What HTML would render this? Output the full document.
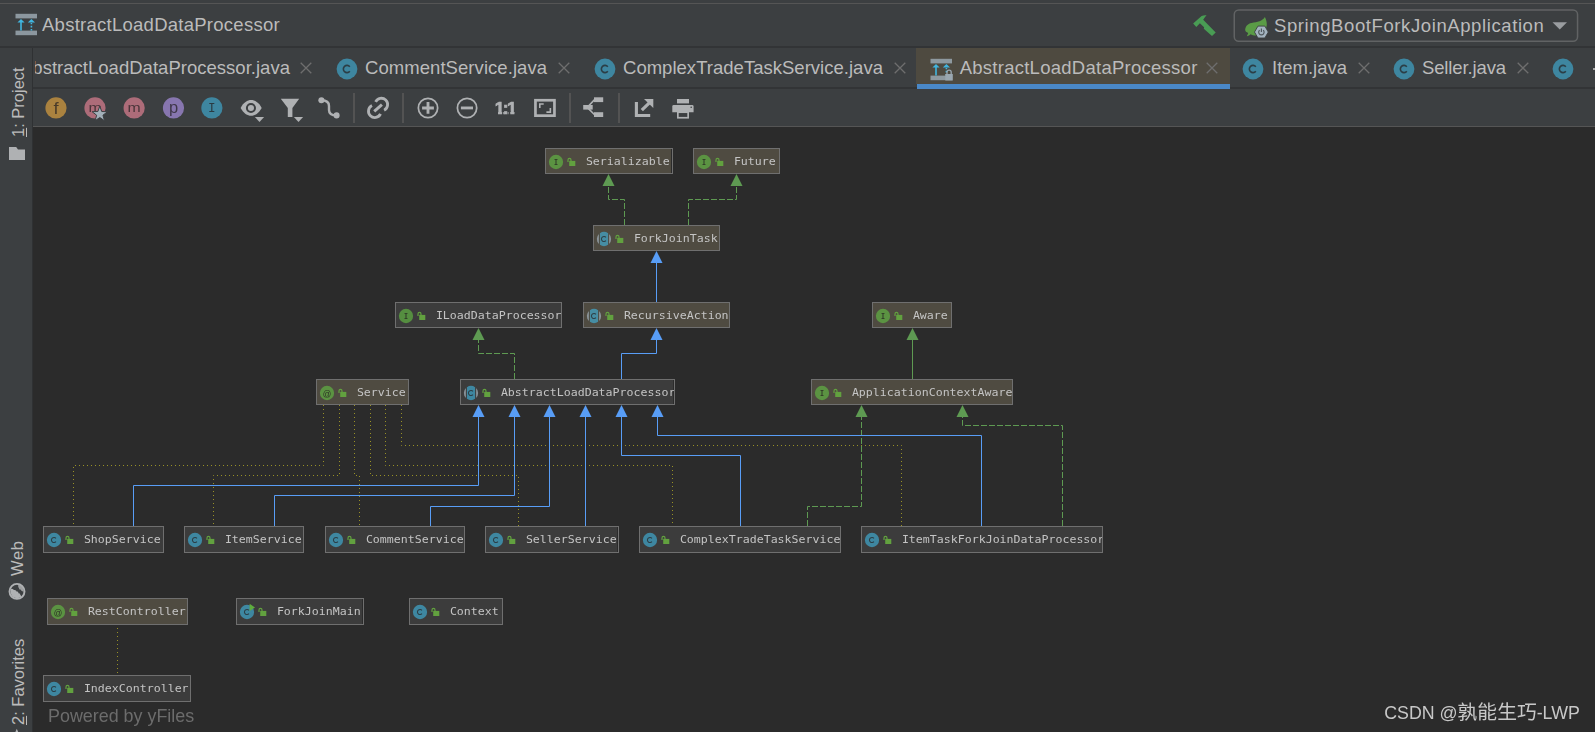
<!DOCTYPE html>
<html><head><meta charset="utf-8"><title>AbstractLoadDataProcessor</title>
<style>
html,body{margin:0;padding:0}
body{width:1595px;height:732px;overflow:hidden;background:#2b2b2b;position:relative;font-family:"Liberation Sans",sans-serif;color:#bbbbbb}
div,svg,span{position:absolute}
#nav{left:0;top:0;width:1595px;height:46px;background:#3c3f41}
#nav .l1{left:0;top:3px;width:1595px;height:1px;background:#555555}
#navb{left:0;top:46px;width:1595px;height:2px;background:#323436}
#tabs{left:0;top:48px;width:1595px;height:39px;background:#3c3f41}
#tabsb{left:0;top:87px;width:1595px;height:2px;background:#323436}
#tool{left:0;top:89px;width:1595px;height:37px;background:#3c3f41}
#toolb{left:33px;top:126px;width:1562px;height:1px;background:#555555}
#side{left:0;top:48px;width:32px;height:684px;background:#3c3f41}
#sideb{left:32px;top:48px;width:1px;height:684px;background:#2f3133}
.t{font-size:18.5px;line-height:24px;white-space:nowrap;color:#bbbbbb;top:8.4px}
.tc{top:10px}
.sv{font-size:16.5px;line-height:20px;white-space:nowrap;color:#bbbbbb;transform-origin:0 0;transform:rotate(-90deg)}
.node{height:26px;box-sizing:border-box;border:1px solid #6f6f6f;overflow:hidden}
.node.lib{background:#4f4b41}
.node.prj{background:#3c3c3c}
.node .ic{left:2px;top:5px}
.node .lk{left:21px;top:8px}
.node span{left:39.9px;top:2px;font:11.6px/20px "DejaVu Sans Mono","Liberation Mono",monospace;color:#c4c4c4;white-space:pre;transform:scaleY(0.91);transform-origin:0 14.3px}
#wm b{font-weight:normal;font-size:19.8px;position:static;letter-spacing:0}
#yf{left:48px;top:705.4px;font-size:17.9px;line-height:22px;color:#6c6c6c;white-space:nowrap}
#wm{left:1384.2px;top:700px;font-size:17.8px;line-height:24px;color:#c8c8c8;white-space:nowrap;font-family:"Liberation Sans","Noto Sans CJK SC",sans-serif}
</style></head><body>
<div id="nav"><div class="l1"></div>
<div style="left:15px;top:12.7px;width:24px;height:24px"><svg width="24" height="24" viewBox="0 0 24 24"><rect x="0.5" y="0.8" width="21.5" height="4.6" fill="#9aa7b0" fill-opacity=".85"/><rect x="0.5" y="17.6" width="21.5" height="4.6" fill="#9aa7b0" fill-opacity=".85"/><path d="M6,17.6 V8.5" stroke="#40b6e0" stroke-width="1.6" fill="none"/><path d="M2.4,9.6 L6,6 L9.6,9.6 z" fill="#40b6e0"/><path d="M16.4,17.6 V10" stroke="#40b6e0" stroke-width="1.6" stroke-dasharray="1.6 1.6" fill="none"/><path d="M12.8,9.6 L16.4,6 L20,9.6 z" fill="#40b6e0"/></svg></div>
<span class="t" style="left:42px;top:13.4px;letter-spacing:0.26px">AbstractLoadDataProcessor</span>
<svg style="left:1191px;top:13px" width="28" height="26" viewBox="0 0 28 26"><path d="M2.15,10.5 L10.6,2.97 Q12.8,2 15.6,2.3 Q13.4,4.5 12.2,6.7 L24.7,19.6 L21,23 L12.8,15.7 L13.1,14.3 L8.9,10.2 L5.3,13.9 z" fill="#499c54"/></svg>
<svg style="left:1230px;top:6px" width="352" height="40" viewBox="1230 6 352 40"><rect x="1234.25" y="9.95" width="343.3" height="31.4" rx="4.5" fill="none" stroke="#616364" stroke-width="1.5"/></svg><svg style="left:1244px;top:16px" width="26" height="24" viewBox="0 0 26 24"><path d="M1.2,14.1 C1.2,10.5 3.5,7.6 7.5,6.9 C10.5,6.3 13,6.3 15.5,5.3 C17.8,4.4 19.6,2.9 20.9,0.9 C22.2,3.5 23,6 22.8,9.1 C22.5,13 20.5,16.5 17,18.3 C13.5,20 9,19.6 6.6,18.2 C5.6,19.2 4.4,19.9 2.8,20.2 C3.4,19 3.9,18 4.2,17 C2.2,16.3 1.2,15.3 1.2,14.1z" fill="#5a9b46"/><path d="M13.95,10.1 L20.85,10.1 L24.3,16.05 L20.85,22 L13.95,22 L10.5,16.05z" fill="#a3b3bf" stroke="#3c3f41" stroke-width="0.9"/><path d="M15.6,14.2 A2.7,2.7 0 1 0 19.2,14.2" fill="none" stroke="#4b5358" stroke-width="1.1"/><path d="M17.4,12.6 V16" stroke="#4b5358" stroke-width="1.1"/></svg><span class="t" style="left:1274px;top:14.4px;letter-spacing:0.6px">SpringBootForkJoinApplication</span><svg style="left:1552px;top:22px" width="16" height="8" viewBox="0 0 16 8"><path d="M0.5,0.3 H15 L7.75,7.6z" fill="#9a9da0"/></svg>
</div>
<div id="navb"></div>
<div id="tabs">
<div style="left:35px;top:0;width:260px;height:39px;overflow:hidden"><span class="t" style="right:5px;letter-spacing:0.02px">AbstractLoadDataProcessor.java</span></div>
<svg class="x" style="left:300px;top:14px" width="12" height="12" viewBox="0 0 12 12"><path d="M0.7,0.7 L11.3,11.3 M11.3,0.7 L0.7,11.3" stroke="#6e6e6e" stroke-width="1.3" fill="none"/></svg>
<svg class="tc" style="left:336px" width="22" height="22" viewBox="0 0 22 22"><circle cx="11" cy="11" r="10.4" fill="#40b6e0" fill-opacity=".6"/><path d="M13.8,13.35 A3.65,3.65 0 1 1 13.8,8.65" fill="none" stroke="#231f20" stroke-opacity=".7" stroke-width="1.6"/></svg>
<span class="t" style="left:365px;letter-spacing:0.06px">CommentService.java</span>
<svg class="x" style="left:558px;top:14px" width="12" height="12" viewBox="0 0 12 12"><path d="M0.7,0.7 L11.3,11.3 M11.3,0.7 L0.7,11.3" stroke="#6e6e6e" stroke-width="1.3" fill="none"/></svg>
<svg class="tc" style="left:594px" width="22" height="22" viewBox="0 0 22 22"><circle cx="11" cy="11" r="10.4" fill="#40b6e0" fill-opacity=".6"/><path d="M13.8,13.35 A3.65,3.65 0 1 1 13.8,8.65" fill="none" stroke="#231f20" stroke-opacity=".7" stroke-width="1.6"/></svg>
<span class="t" style="left:623px;letter-spacing:0.02px">ComplexTradeTaskService.java</span>
<svg class="x" style="left:894px;top:14px" width="12" height="12" viewBox="0 0 12 12"><path d="M0.7,0.7 L11.3,11.3 M11.3,0.7 L0.7,11.3" stroke="#6e6e6e" stroke-width="1.3" fill="none"/></svg>
<div style="left:916px;top:0;width:314px;height:36px;background:#4e4a40"></div>
<div style="left:930px;top:10px;width:24px;height:24px"><svg width="24" height="24" viewBox="0 0 24 24"><rect x="0.5" y="0.8" width="21.5" height="4.6" fill="#9aa7b0" fill-opacity=".85"/><rect x="0.5" y="17.6" width="21.5" height="4.6" fill="#9aa7b0" fill-opacity=".85"/><path d="M6,17.6 V8.5" stroke="#40b6e0" stroke-width="1.6" fill="none"/><path d="M2.4,9.6 L6,6 L9.6,9.6 z" fill="#40b6e0"/><path d="M16.4,17.6 V10" stroke="#40b6e0" stroke-width="1.6" stroke-dasharray="1.6 1.6" fill="none"/><path d="M12.8,9.6 L16.4,6 L20,9.6 z" fill="#40b6e0"/><rect x="15.3" y="16" width="7.5" height="6.5" fill="#9aa7b0"/><path d="M17,16 V14.2 A2.1,2.1 0 0 1 21.2,14.2 V16" fill="none" stroke="#9aa7b0" stroke-width="1.3"/></svg></div>
<span class="t" style="left:959.7px;letter-spacing:0.26px">AbstractLoadDataProcessor</span>
<svg class="x" style="left:1206px;top:14px" width="12" height="12" viewBox="0 0 12 12"><path d="M0.7,0.7 L11.3,11.3 M11.3,0.7 L0.7,11.3" stroke="#6e6e6e" stroke-width="1.3" fill="none"/></svg>
<svg class="tc" style="left:1242px" width="22" height="22" viewBox="0 0 22 22"><circle cx="11" cy="11" r="10.4" fill="#40b6e0" fill-opacity=".6"/><path d="M13.8,13.35 A3.65,3.65 0 1 1 13.8,8.65" fill="none" stroke="#231f20" stroke-opacity=".7" stroke-width="1.6"/></svg>
<span class="t" style="left:1272px;letter-spacing:0px">Item.java</span>
<svg class="x" style="left:1358px;top:14px" width="12" height="12" viewBox="0 0 12 12"><path d="M0.7,0.7 L11.3,11.3 M11.3,0.7 L0.7,11.3" stroke="#6e6e6e" stroke-width="1.3" fill="none"/></svg>
<svg class="tc" style="left:1393px" width="22" height="22" viewBox="0 0 22 22"><circle cx="11" cy="11" r="10.4" fill="#40b6e0" fill-opacity=".6"/><path d="M13.8,13.35 A3.65,3.65 0 1 1 13.8,8.65" fill="none" stroke="#231f20" stroke-opacity=".7" stroke-width="1.6"/></svg>
<span class="t" style="left:1422px;letter-spacing:-0.13px">Seller.java</span>
<svg class="x" style="left:1517px;top:14px" width="12" height="12" viewBox="0 0 12 12"><path d="M0.7,0.7 L11.3,11.3 M11.3,0.7 L0.7,11.3" stroke="#6e6e6e" stroke-width="1.3" fill="none"/></svg>
<svg class="tc" style="left:1552px" width="22" height="22" viewBox="0 0 22 22"><circle cx="11" cy="11" r="10.4" fill="#40b6e0" fill-opacity=".6"/><path d="M13.8,13.35 A3.65,3.65 0 1 1 13.8,8.65" fill="none" stroke="#231f20" stroke-opacity=".7" stroke-width="1.6"/></svg>
<div style="left:1593px;top:20px;width:2px;height:2px;background:#a8a8a8"></div>
</div>
<div id="tabsb"></div>
<div style="left:917px;top:84px;width:313px;height:5px;background:#4a88c7"></div>
<div id="tool">
<svg style="left:0;top:-89px;will-change:transform" width="1595" height="130" viewBox="0 0 1595 130">
<circle cx="56.0" cy="107.95" r="10.6" fill="#f4af3d" fill-opacity=".6"/><text transform="translate(56.0,113.7) scale(1.15,1)" text-anchor="middle" font-family="'Liberation Sans',sans-serif" font-size="16" fill="#231f20" fill-opacity=".72">f</text>
<circle cx="95" cy="107.95" r="10.6" fill="#f98b9e" fill-opacity=".6"/><text transform="translate(95,112.3) scale(1.22,1)" text-anchor="middle" font-family="'Liberation Sans',sans-serif" font-size="13" fill="#231f20" fill-opacity=".72">m</text><path d="M99.80,106.10 L101.74,111.53 L107.50,111.70 L102.94,115.22 L104.56,120.75 L99.80,117.50 L95.04,120.75 L96.66,115.22 L92.10,111.70 L97.86,111.53z" fill="#a3b0b9" stroke="#3c3f41" stroke-width="1" stroke-linejoin="miter"/>
<circle cx="134.15" cy="107.95" r="10.6" fill="#f98b9e" fill-opacity=".6"/><text transform="translate(134.15,112.3) scale(1.22,1)" text-anchor="middle" font-family="'Liberation Sans',sans-serif" font-size="13" fill="#231f20" fill-opacity=".72">m</text>
<circle cx="173.5" cy="107.95" r="10.6" fill="#b99bf8" fill-opacity=".6"/><text transform="translate(173.5,112.5) scale(1.0,1)" text-anchor="middle" font-family="'Liberation Sans',sans-serif" font-size="16.5" fill="#231f20" fill-opacity=".72">p</text>
<circle cx="211.9" cy="107.95" r="10.6" fill="#40b6e0" fill-opacity=".6"/><text transform="translate(211.9,112.4) scale(1.0,1)" text-anchor="middle" font-family="'DejaVu Sans Mono',monospace" font-size="12.6" fill="#231f20" fill-opacity=".72">I</text>
<path d="M240.6,107.9 C243.5,102.6 247.5,100.1 251.15,100.1 C254.8,100.1 258.8,102.6 261.7,107.9 C258.8,113.2 254.8,115.7 251.15,115.7 C247.5,115.7 243.5,113.2 240.6,107.9z" fill="#afb1b3"/><circle cx="250.95" cy="108" r="4.05" fill="none" stroke="#3c3f41" stroke-width="2"/><path d="M254.9,117 H264.1 L259.5,122.1z" fill="#afb1b3"/>
<path d="M280.8,98.8 H299.2 L292.4,108 V117 H287.8 V108z" fill="#afb1b3"/><path d="M293.9,117 H303.1 L298.5,122.1z" fill="#afb1b3"/>
<circle cx="321.4" cy="100.3" r="3.05" fill="#afb1b3"/><circle cx="336.6" cy="115.4" r="3.05" fill="#afb1b3"/><path d="M321.4,100.3 C326.5,100.3 329,101.8 329,106 L329,110 C329,114 331.5,115.4 336.6,115.4" fill="none" stroke="#afb1b3" stroke-width="2.4"/>
<rect x="353" y="93" width="2" height="30" fill="#535353"/>
<g fill="none" stroke="#afb1b3" stroke-width="2.8"><path d="M372,105.6 A6.3,6.3 0 1 0 380.5,113.9"/><path d="M384.1,110.2 A6.3,6.3 0 1 0 375.6,101.9"/><path d="M374.2,111.3 L381.9,104.7" stroke-width="3"/></g>
<rect x="402" y="93" width="2" height="30" fill="#535353"/>
<circle cx="428" cy="107.95" r="9.65" fill="none" stroke="#afb1b3" stroke-width="1.75"/><path d="M422.1,107.95 H433.9 M428,102.1 V113.8" stroke="#afb1b3" stroke-width="2.85" fill="none"/>
<circle cx="467.05" cy="107.95" r="9.65" fill="none" stroke="#afb1b3" stroke-width="1.75"/><path d="M460.9,107.95 H473" stroke="#afb1b3" stroke-width="2.85" fill="none"/>
<defs><clipPath id="c11"><rect x="490" y="95" width="30" height="16.3"/><rect x="498" y="111" width="4.1" height="4"/><rect x="510.3" y="111" width="4.1" height="4"/><rect x="503.4" y="111" width="5" height="4"/></clipPath></defs>
<text x="494.8" y="114.2" clip-path="url(#c11)" font-family="'Liberation Sans',sans-serif" font-weight="bold" font-size="17.4" letter-spacing="-1.6" fill="#afb1b3" stroke="#afb1b3" stroke-width="0.7">1:1</text>
<rect x="535.45" y="100.25" width="19" height="15.4" fill="none" stroke="#afb1b3" stroke-width="2.7"/><path d="M539.8,108 V103.95 H543.7 M550.35,108 V112.1 H546.4" fill="none" stroke="#afb1b3" stroke-width="1.6"/>
<rect x="569" y="93" width="2" height="30" fill="#535353"/>
<rect x="583.2" y="105" width="9.5" height="4.6" fill="#afb1b3"/><rect x="594" y="97.3" width="9.2" height="4.8" fill="#afb1b3"/><rect x="594" y="112.2" width="9.2" height="4.8" fill="#afb1b3"/><path d="M588.5,106 L594.6,99.6 M588.5,108.6 L594.6,114.8" stroke="#afb1b3" stroke-width="1.6" fill="none"/>
<rect x="618" y="93" width="2" height="30" fill="#535353"/>
<path d="M636.4,101.9 V115.5 H650.2" fill="none" stroke="#afb1b3" stroke-width="3.1"/><path d="M641.8,110.2 L649.6,102.6" stroke="#afb1b3" stroke-width="3.2" fill="none"/><path d="M644,99 H653.3 V108z" fill="#afb1b3"/>
<rect x="677" y="99" width="12" height="4.4" fill="#afb1b3"/><path d="M672.3,106.4 Q672.3,105 673.7,105 H692.2 Q693.6,105 693.6,106.4 V112.2 H672.3z" fill="#afb1b3"/><rect x="677.85" y="112.2" width="10.3" height="5.55" fill="none" stroke="#afb1b3" stroke-width="1.7"/><circle cx="691.2" cy="107.2" r="0.8" fill="#3c3f41"/>
</svg>
</div>
<div id="toolb"></div>
<div id="side">
<span class="sv" style="left:7.9px;top:89px"><u style="text-decoration-thickness:1px;text-underline-offset:2px">1</u>: Project</span>
<svg style="left:8px;top:98px" width="18" height="15" viewBox="0 0 18 15"><path d="M1,1 H8.2 L10,3.4 H17 V14 H1z" fill="#afb1b3"/></svg>
<span class="sv" style="left:7px;top:528.3px;letter-spacing:0.6px">Web</span>
<svg style="left:8px;top:534px" width="18" height="18" viewBox="0 0 18 18"><circle cx="9" cy="9.4" r="7.5" fill="#3c3f41" stroke="#afb1b3" stroke-width="1.9"/><path d="M2.6,7 C3.6,6.6 5,7 6,8 C7.2,7.6 8.6,8.4 8.4,9.6 C9.6,9.4 10.6,10 10.4,11.2 C11.6,11 12.6,11.8 12.2,13 C13,13.4 13.4,14.2 13,15 C11,16.6 7,16.6 4.6,14.6 C2.8,12.8 2.2,9.6 2.6,7z" fill="#afb1b3"/><path d="M9,2.4 C10.4,2.8 10.8,4 10,5 C11,5.4 11.4,6.4 11,7.2 C12.4,7 13.6,7.8 13.4,9 C14.4,9 15.2,9.6 15.4,10.4 C16,8 15.4,5.4 13.4,3.6 C12,2.6 10.4,2.2 9,2.4z" fill="#afb1b3" fill-opacity=".85"/></svg>
<span class="sv" style="left:7.5px;top:676.5px"><u style="text-decoration-thickness:1px;text-underline-offset:2px">2</u>: Favorites</span>
<svg style="left:9px;top:680px" width="16" height="6" viewBox="0 0 16 6"><path d="M7.8,0.8 L9.4,4.5 L6.2,4.5z" fill="#afb1b3"/></svg>
</div>
<div id="sideb"></div>
<svg id="edges" width="1595" height="732" viewBox="0 0 1595 732">
<g fill="none" stroke="#989126" stroke-width="1" stroke-dasharray="1 3">
<path d="M323.5,405 V465.5 H73.5 V526"/>
<path d="M339.5,405 V475.5 H213.5 V526"/>
<path d="M354.5,405 V475.5 H359.5 V526"/>
<path d="M370.5,405 V475.5 H518.5 V526"/>
<path d="M385.5,405 V465.5 H672.5 V526"/>
<path d="M401.5,405 V445.5 H901.5 V526"/>
<path d="M117.5,624 V675"/>
</g>
<g fill="none" stroke="#5e9a52" stroke-width="1" stroke-dasharray="6 2">
<path d="M624.5,225 V199.5 H608.5 V186"/>
<path d="M688.5,225 V199.5 H736.5 V186"/>
<path d="M514.5,379 V353.5 H478.5 V340"/>
<path d="M807.5,526 V506.5 H861.5 V417"/>
<path d="M1062.5,526 V425.5 H962.5 V417"/>
</g>
<g fill="none" stroke="#5e9a52" stroke-width="1">
<path d="M912.5,379 V340"/>
</g>
<g fill="none" stroke="#589df6" stroke-width="1">
<path d="M656.5,302 V263"/>
<path d="M621.5,379 V353.5 H656.5 V340"/>
<path d="M133.5,526 V485.5 H478.5 V417"/>
<path d="M274.5,526 V495.5 H514.5 V417"/>
<path d="M430.5,526 V506.5 H549.5 V417"/>
<path d="M585.5,526 V417"/>
<path d="M740.5,526 V455.5 H621.5 V417"/>
<path d="M981.5,526 V435.5 H657.5 V417"/>
</g>
<path d="M608.5,174 l6,12 h-12 z" fill="#5e9a52"/>
<path d="M736.5,174 l6,12 h-12 z" fill="#5e9a52"/>
<path d="M478.5,328 l6,12 h-12 z" fill="#5e9a52"/>
<path d="M861.5,405 l6,12 h-12 z" fill="#5e9a52"/>
<path d="M962.5,405 l6,12 h-12 z" fill="#5e9a52"/>
<path d="M912.5,328 l6,12 h-12 z" fill="#5e9a52"/>
<path d="M656.5,251 l6,12 h-12 z" fill="#589df6"/>
<path d="M656.5,328 l6,12 h-12 z" fill="#589df6"/>
<path d="M478.5,405 l6,12 h-12 z" fill="#589df6"/>
<path d="M514.5,405 l6,12 h-12 z" fill="#589df6"/>
<path d="M549.5,405 l6,12 h-12 z" fill="#589df6"/>
<path d="M585.5,405 l6,12 h-12 z" fill="#589df6"/>
<path d="M621.5,405 l6,12 h-12 z" fill="#589df6"/>
<path d="M657.5,405 l6,12 h-12 z" fill="#589df6"/>
</svg>
<div class="node lib" style="left:545px;top:148px;width:128px;box-shadow:inset -1px 0 0 #2b2b2b"><svg class="ic" width="16" height="16" viewBox="0 0 16 16"><circle cx="8" cy="8" r="7.15" fill="#62b543" fill-opacity=".68"/><path d="M6.55,5.1 h2.9 v0.9 h-0.9 v4 h0.9 v0.9 h-2.9 v-0.9 h0.9 v-4 h-0.9z" fill="#231f20" fill-opacity=".7"/></svg><svg class="lk" width="10" height="10" viewBox="0 0 10 10"><rect x="2.2" y="3.9" width="6.1" height="5.1" fill="#62a13f"/><path d="M1,4.9 V2.9 A1.5,1.5 0 0 1 4,2.9 V4" fill="none" stroke="#62a13f" stroke-width="1.2"/></svg><span>Serializable</span></div>
<div class="node lib" style="left:693px;top:148px;width:87px"><svg class="ic" width="16" height="16" viewBox="0 0 16 16"><circle cx="8" cy="8" r="7.15" fill="#62b543" fill-opacity=".68"/><path d="M6.55,5.1 h2.9 v0.9 h-0.9 v4 h0.9 v0.9 h-2.9 v-0.9 h0.9 v-4 h-0.9z" fill="#231f20" fill-opacity=".7"/></svg><svg class="lk" width="10" height="10" viewBox="0 0 10 10"><rect x="2.2" y="3.9" width="6.1" height="5.1" fill="#62a13f"/><path d="M1,4.9 V2.9 A1.5,1.5 0 0 1 4,2.9 V4" fill="none" stroke="#62a13f" stroke-width="1.2"/></svg><span>Future</span></div>
<div class="node lib" style="left:593px;top:225px;width:127px"><svg class="ic" width="16" height="16" viewBox="0 0 16 16"><path d="M3.9,2.142 A7.15,7.15 0 0 1 12.1,2.142 V13.858 A7.15,7.15 0 0 1 3.9,13.858z" fill="#40b6e0" fill-opacity=".62"/><path d="M2.9,2.989 A7.15,7.15 0 0 0 2.9,13.011z" fill="#9aa7b0" fill-opacity=".8"/><path d="M13.1,2.989 A7.15,7.15 0 0 1 13.1,13.011z" fill="#9aa7b0" fill-opacity=".8"/><path d="M9.95,9.65 A2.55,2.55 0 1 1 9.95,6.35" fill="none" stroke="#231f20" stroke-opacity=".7" stroke-width="1.05"/></svg><svg class="lk" width="10" height="10" viewBox="0 0 10 10"><rect x="2.2" y="3.9" width="6.1" height="5.1" fill="#62a13f"/><path d="M1,4.9 V2.9 A1.5,1.5 0 0 1 4,2.9 V4" fill="none" stroke="#62a13f" stroke-width="1.2"/></svg><span>ForkJoinTask</span></div>
<div class="node prj" style="left:395px;top:302px;width:167px"><svg class="ic" width="16" height="16" viewBox="0 0 16 16"><circle cx="8" cy="8" r="7.15" fill="#62b543" fill-opacity=".68"/><path d="M6.55,5.1 h2.9 v0.9 h-0.9 v4 h0.9 v0.9 h-2.9 v-0.9 h0.9 v-4 h-0.9z" fill="#231f20" fill-opacity=".7"/></svg><svg class="lk" width="10" height="10" viewBox="0 0 10 10"><rect x="2.2" y="3.9" width="6.1" height="5.1" fill="#62a13f"/><path d="M1,4.9 V2.9 A1.5,1.5 0 0 1 4,2.9 V4" fill="none" stroke="#62a13f" stroke-width="1.2"/></svg><span>ILoadDataProcessor</span></div>
<div class="node lib" style="left:583px;top:302px;width:147px"><svg class="ic" width="16" height="16" viewBox="0 0 16 16"><path d="M3.9,2.142 A7.15,7.15 0 0 1 12.1,2.142 V13.858 A7.15,7.15 0 0 1 3.9,13.858z" fill="#40b6e0" fill-opacity=".62"/><path d="M2.9,2.989 A7.15,7.15 0 0 0 2.9,13.011z" fill="#9aa7b0" fill-opacity=".8"/><path d="M13.1,2.989 A7.15,7.15 0 0 1 13.1,13.011z" fill="#9aa7b0" fill-opacity=".8"/><path d="M9.95,9.65 A2.55,2.55 0 1 1 9.95,6.35" fill="none" stroke="#231f20" stroke-opacity=".7" stroke-width="1.05"/></svg><svg class="lk" width="10" height="10" viewBox="0 0 10 10"><rect x="2.2" y="3.9" width="6.1" height="5.1" fill="#62a13f"/><path d="M1,4.9 V2.9 A1.5,1.5 0 0 1 4,2.9 V4" fill="none" stroke="#62a13f" stroke-width="1.2"/></svg><span>RecursiveAction</span></div>
<div class="node lib" style="left:872px;top:302px;width:80px"><svg class="ic" width="16" height="16" viewBox="0 0 16 16"><circle cx="8" cy="8" r="7.15" fill="#62b543" fill-opacity=".68"/><path d="M6.55,5.1 h2.9 v0.9 h-0.9 v4 h0.9 v0.9 h-2.9 v-0.9 h0.9 v-4 h-0.9z" fill="#231f20" fill-opacity=".7"/></svg><svg class="lk" width="10" height="10" viewBox="0 0 10 10"><rect x="2.2" y="3.9" width="6.1" height="5.1" fill="#62a13f"/><path d="M1,4.9 V2.9 A1.5,1.5 0 0 1 4,2.9 V4" fill="none" stroke="#62a13f" stroke-width="1.2"/></svg><span>Aware</span></div>
<div class="node lib" style="left:316px;top:379px;width:93px"><svg class="ic" width="16" height="16" viewBox="0 0 16 16"><circle cx="8" cy="8" r="7.15" fill="#62b543" fill-opacity=".68"/><text x="8.1" y="11.5" text-anchor="middle" font-family="'Liberation Sans',sans-serif" font-size="8.4" fill="#231f20" fill-opacity=".85">@</text></svg><svg class="lk" width="10" height="10" viewBox="0 0 10 10"><rect x="2.2" y="3.9" width="6.1" height="5.1" fill="#62a13f"/><path d="M1,4.9 V2.9 A1.5,1.5 0 0 1 4,2.9 V4" fill="none" stroke="#62a13f" stroke-width="1.2"/></svg><span>Service</span></div>
<div class="node prj" style="left:460px;top:379px;width:215px;box-shadow:inset -1px 0 0 #2b2b2b"><svg class="ic" width="16" height="16" viewBox="0 0 16 16"><path d="M3.9,2.142 A7.15,7.15 0 0 1 12.1,2.142 V13.858 A7.15,7.15 0 0 1 3.9,13.858z" fill="#40b6e0" fill-opacity=".62"/><path d="M2.9,2.989 A7.15,7.15 0 0 0 2.9,13.011z" fill="#9aa7b0" fill-opacity=".8"/><path d="M13.1,2.989 A7.15,7.15 0 0 1 13.1,13.011z" fill="#9aa7b0" fill-opacity=".8"/><path d="M9.95,9.65 A2.55,2.55 0 1 1 9.95,6.35" fill="none" stroke="#231f20" stroke-opacity=".7" stroke-width="1.05"/></svg><svg class="lk" width="10" height="10" viewBox="0 0 10 10"><rect x="2.2" y="3.9" width="6.1" height="5.1" fill="#62a13f"/><path d="M1,4.9 V2.9 A1.5,1.5 0 0 1 4,2.9 V4" fill="none" stroke="#62a13f" stroke-width="1.2"/></svg><span>AbstractLoadDataProcessor</span></div>
<div class="node lib" style="left:811px;top:379px;width:202px"><svg class="ic" width="16" height="16" viewBox="0 0 16 16"><circle cx="8" cy="8" r="7.15" fill="#62b543" fill-opacity=".68"/><path d="M6.55,5.1 h2.9 v0.9 h-0.9 v4 h0.9 v0.9 h-2.9 v-0.9 h0.9 v-4 h-0.9z" fill="#231f20" fill-opacity=".7"/></svg><svg class="lk" width="10" height="10" viewBox="0 0 10 10"><rect x="2.2" y="3.9" width="6.1" height="5.1" fill="#62a13f"/><path d="M1,4.9 V2.9 A1.5,1.5 0 0 1 4,2.9 V4" fill="none" stroke="#62a13f" stroke-width="1.2"/></svg><span>ApplicationContextAware</span></div>
<div class="node prj" style="left:43px;top:526px;width:121px;height:27px"><svg class="ic" width="16" height="16" viewBox="0 0 16 16"><circle cx="8" cy="8" r="7.15" fill="#40b6e0" fill-opacity=".62"/><path d="M9.95,9.65 A2.55,2.55 0 1 1 9.95,6.35" fill="none" stroke="#231f20" stroke-opacity=".7" stroke-width="1.05"/></svg><svg class="lk" width="10" height="10" viewBox="0 0 10 10"><rect x="2.2" y="3.9" width="6.1" height="5.1" fill="#62a13f"/><path d="M1,4.9 V2.9 A1.5,1.5 0 0 1 4,2.9 V4" fill="none" stroke="#62a13f" stroke-width="1.2"/></svg><span>ShopService</span></div>
<div class="node prj" style="left:184px;top:526px;width:120px;height:27px"><svg class="ic" width="16" height="16" viewBox="0 0 16 16"><circle cx="8" cy="8" r="7.15" fill="#40b6e0" fill-opacity=".62"/><path d="M9.95,9.65 A2.55,2.55 0 1 1 9.95,6.35" fill="none" stroke="#231f20" stroke-opacity=".7" stroke-width="1.05"/></svg><svg class="lk" width="10" height="10" viewBox="0 0 10 10"><rect x="2.2" y="3.9" width="6.1" height="5.1" fill="#62a13f"/><path d="M1,4.9 V2.9 A1.5,1.5 0 0 1 4,2.9 V4" fill="none" stroke="#62a13f" stroke-width="1.2"/></svg><span>ItemService</span></div>
<div class="node prj" style="left:325px;top:526px;width:140px;height:27px"><svg class="ic" width="16" height="16" viewBox="0 0 16 16"><circle cx="8" cy="8" r="7.15" fill="#40b6e0" fill-opacity=".62"/><path d="M9.95,9.65 A2.55,2.55 0 1 1 9.95,6.35" fill="none" stroke="#231f20" stroke-opacity=".7" stroke-width="1.05"/></svg><svg class="lk" width="10" height="10" viewBox="0 0 10 10"><rect x="2.2" y="3.9" width="6.1" height="5.1" fill="#62a13f"/><path d="M1,4.9 V2.9 A1.5,1.5 0 0 1 4,2.9 V4" fill="none" stroke="#62a13f" stroke-width="1.2"/></svg><span>CommentService</span></div>
<div class="node prj" style="left:485px;top:526px;width:134px;height:27px;box-shadow:inset -1px 0 0 #2b2b2b"><svg class="ic" width="16" height="16" viewBox="0 0 16 16"><circle cx="8" cy="8" r="7.15" fill="#40b6e0" fill-opacity=".62"/><path d="M9.95,9.65 A2.55,2.55 0 1 1 9.95,6.35" fill="none" stroke="#231f20" stroke-opacity=".7" stroke-width="1.05"/></svg><svg class="lk" width="10" height="10" viewBox="0 0 10 10"><rect x="2.2" y="3.9" width="6.1" height="5.1" fill="#62a13f"/><path d="M1,4.9 V2.9 A1.5,1.5 0 0 1 4,2.9 V4" fill="none" stroke="#62a13f" stroke-width="1.2"/></svg><span>SellerService</span></div>
<div class="node prj" style="left:639px;top:526px;width:202px;height:27px"><svg class="ic" width="16" height="16" viewBox="0 0 16 16"><circle cx="8" cy="8" r="7.15" fill="#40b6e0" fill-opacity=".62"/><path d="M9.95,9.65 A2.55,2.55 0 1 1 9.95,6.35" fill="none" stroke="#231f20" stroke-opacity=".7" stroke-width="1.05"/></svg><svg class="lk" width="10" height="10" viewBox="0 0 10 10"><rect x="2.2" y="3.9" width="6.1" height="5.1" fill="#62a13f"/><path d="M1,4.9 V2.9 A1.5,1.5 0 0 1 4,2.9 V4" fill="none" stroke="#62a13f" stroke-width="1.2"/></svg><span>ComplexTradeTaskService</span></div>
<div class="node prj" style="left:861px;top:526px;width:242px;height:27px"><svg class="ic" width="16" height="16" viewBox="0 0 16 16"><circle cx="8" cy="8" r="7.15" fill="#40b6e0" fill-opacity=".62"/><path d="M9.95,9.65 A2.55,2.55 0 1 1 9.95,6.35" fill="none" stroke="#231f20" stroke-opacity=".7" stroke-width="1.05"/></svg><svg class="lk" width="10" height="10" viewBox="0 0 10 10"><rect x="2.2" y="3.9" width="6.1" height="5.1" fill="#62a13f"/><path d="M1,4.9 V2.9 A1.5,1.5 0 0 1 4,2.9 V4" fill="none" stroke="#62a13f" stroke-width="1.2"/></svg><span>ItemTaskForkJoinDataProcessor</span></div>
<div class="node lib" style="left:47px;top:598px;width:141px;height:27px"><svg class="ic" width="16" height="16" viewBox="0 0 16 16"><circle cx="8" cy="8" r="7.15" fill="#62b543" fill-opacity=".68"/><text x="8.1" y="11.5" text-anchor="middle" font-family="'Liberation Sans',sans-serif" font-size="8.4" fill="#231f20" fill-opacity=".85">@</text></svg><svg class="lk" width="10" height="10" viewBox="0 0 10 10"><rect x="2.2" y="3.9" width="6.1" height="5.1" fill="#62a13f"/><path d="M1,4.9 V2.9 A1.5,1.5 0 0 1 4,2.9 V4" fill="none" stroke="#62a13f" stroke-width="1.2"/></svg><span>RestController</span></div>
<div class="node prj" style="left:236px;top:598px;width:128px;height:27px;box-shadow:inset -1px 0 0 #2b2b2b"><svg class="ic" width="17" height="17" viewBox="0 0 17 17" style="overflow:visible"><circle cx="8" cy="8" r="7.15" fill="#40b6e0" fill-opacity=".62"/><path d="M9.95,9.65 A2.55,2.55 0 1 1 9.95,6.35" fill="none" stroke="#231f20" stroke-opacity=".7" stroke-width="1.05"/><path d="M10.6,-0.2 L16,3.4 L10.6,7 z" fill="#5fad3f"/></svg><svg class="lk" width="10" height="10" viewBox="0 0 10 10"><rect x="2.2" y="3.9" width="6.1" height="5.1" fill="#62a13f"/><path d="M1,4.9 V2.9 A1.5,1.5 0 0 1 4,2.9 V4" fill="none" stroke="#62a13f" stroke-width="1.2"/></svg><span>ForkJoinMain</span></div>
<div class="node prj" style="left:409px;top:598px;width:94px;height:27px"><svg class="ic" width="16" height="16" viewBox="0 0 16 16"><circle cx="8" cy="8" r="7.15" fill="#40b6e0" fill-opacity=".62"/><path d="M9.95,9.65 A2.55,2.55 0 1 1 9.95,6.35" fill="none" stroke="#231f20" stroke-opacity=".7" stroke-width="1.05"/></svg><svg class="lk" width="10" height="10" viewBox="0 0 10 10"><rect x="2.2" y="3.9" width="6.1" height="5.1" fill="#62a13f"/><path d="M1,4.9 V2.9 A1.5,1.5 0 0 1 4,2.9 V4" fill="none" stroke="#62a13f" stroke-width="1.2"/></svg><span>Context</span></div>
<div class="node prj" style="left:43px;top:675px;width:148px;height:27px"><svg class="ic" width="16" height="16" viewBox="0 0 16 16"><circle cx="8" cy="8" r="7.15" fill="#40b6e0" fill-opacity=".62"/><path d="M9.95,9.65 A2.55,2.55 0 1 1 9.95,6.35" fill="none" stroke="#231f20" stroke-opacity=".7" stroke-width="1.05"/></svg><svg class="lk" width="10" height="10" viewBox="0 0 10 10"><rect x="2.2" y="3.9" width="6.1" height="5.1" fill="#62a13f"/><path d="M1,4.9 V2.9 A1.5,1.5 0 0 1 4,2.9 V4" fill="none" stroke="#62a13f" stroke-width="1.2"/></svg><span>IndexController</span></div>
<div id="yf">Powered by yFiles</div>
<div id="wm">CSDN @<b>孰能生巧</b>-LWP</div>
</body></html>
